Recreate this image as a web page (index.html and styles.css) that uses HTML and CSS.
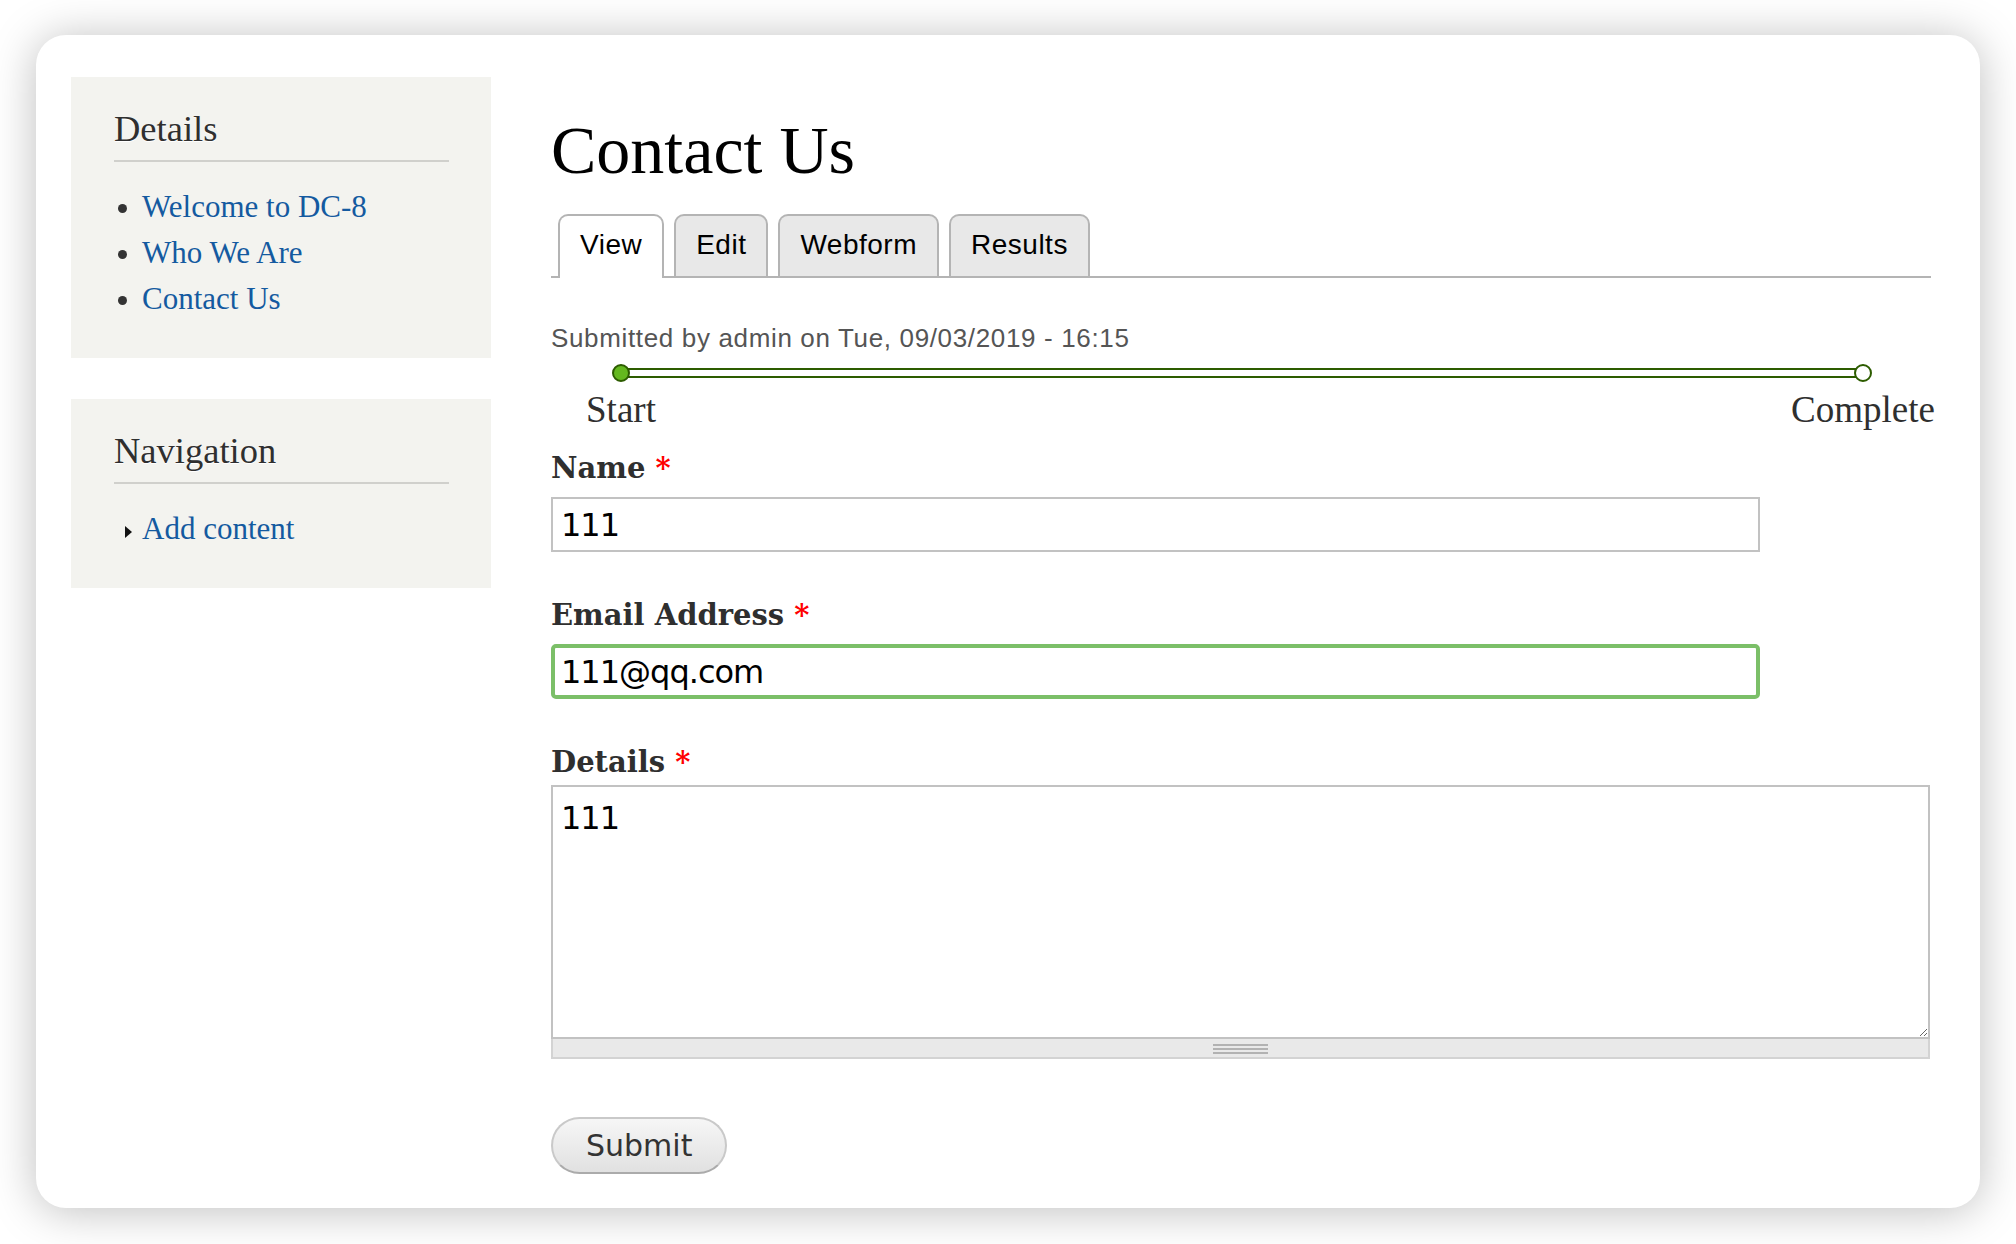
FILE: index.html
```html
<!DOCTYPE html>
<html lang="en">
<head>
<meta charset="utf-8">
<title>Contact Us | DC-8</title>
<link rel="stylesheet" href="styles.css">
</head>
<body>
<div class="card">
  <aside class="sidebar">
    <section class="block">
      <h2 class="block-title">Details</h2>
      <ul class="menu">
        <li class="leaf"><a href="#">Welcome to DC-8</a></li>
        <li class="leaf"><a href="#">Who We Are</a></li>
        <li class="leaf"><a href="#">Contact Us</a></li>
      </ul>
    </section>
    <section class="block">
      <h2 class="block-title">Navigation</h2>
      <ul class="menu">
        <li class="collapsed"><a href="#">Add content</a></li>
      </ul>
    </section>
  </aside>

  <main class="main">
    <h1 class="page-title">Contact Us</h1>
    <ul class="tabs">
      <li class="tab active"><a href="#">View</a></li>
      <li class="tab"><a href="#">Edit</a></li>
      <li class="tab"><a href="#">Webform</a></li>
      <li class="tab"><a href="#">Results</a></li>
    </ul>

    <p class="submitted">Submitted by admin on Tue, 09/03/2019 - 16:15</p>

    <div class="progress">
      <div class="step"><span class="dot done"></span><span class="step-label">Start</span></div>
      <div class="step step-end"><span class="dot"></span><span class="step-label">Complete</span></div>
    </div>

    <form class="form" onsubmit="return false">
      <div class="field">
        <label class="field-label" for="name">Name <span class="req">*</span></label>
        <input class="text-input" id="name" type="text" value="111">
      </div>
      <div class="field">
        <label class="field-label" for="email">Email Address <span class="req">*</span></label>
        <input class="text-input focused" id="email" type="email" value="111@qq.com">
      </div>
      <div class="field field-area">
        <label class="field-label" for="details">Details <span class="req">*</span></label>
        <textarea class="textarea" id="details">111</textarea>
        <div class="grippie"><div class="grip-lines"></div></div>
      </div>
      <button class="submit" type="submit">Submit</button>
    </form>
  </main>
</div>
</body>
</html>
```

FILE: styles.css
```css
html, body {
  margin: 0;
  padding: 0;
  background: #ffffff;
}

body {
  width: 2016px;
  height: 1244px;
  overflow: hidden;
  font-family: "Liberation Serif", serif;
  color: #333;
}

.card {
  box-sizing: border-box;
  width: 1944px;
  height: 1173px;
  margin: 35px 36px 0 36px;
  padding: 42px 49px 0 35px;
  background: #fff;
  border-radius: 30px;
  box-shadow: 0 3px 46px rgba(0, 0, 0, 0.26);
  display: flex;
  gap: 60px;
}

/* ---------- Sidebar ---------- */
.sidebar {
  width: 420px;
  flex: none;
  display: flex;
  flex-direction: column;
  gap: 41px;
}

.block {
  background: #f3f3ef;
  padding: 30px 42px 36px 43px;
}

.block-title {
  margin: 0;
  padding-bottom: 9px;
  border-bottom: 2px solid #d0d0cc;
  font-family: "Liberation Serif", serif;
  font-weight: normal;
  font-size: 36.5px;
  line-height: 44px;
  color: #2f2f2f;
  text-shadow: 0 1px 0 #fff;
}

.menu {
  list-style: none;
  margin: 22px 0 0 0;
  padding: 0 0 0 4px;
}

.menu li {
  display: flex;
  align-items: center;
  font-size: 31px;
  line-height: 46px;
}

.menu li.leaf::before {
  content: "";
  width: 9px;
  height: 9px;
  border-radius: 50%;
  background: #333;
  margin-right: 15px;
  margin-top: 2px;
  flex: none;
}

.menu li.collapsed::before {
  content: "";
  width: 0;
  height: 0;
  border-left: 7px solid #111;
  border-top: 6px solid transparent;
  border-bottom: 6px solid transparent;
  margin-left: 7px;
  margin-right: 10px;
  margin-top: 6px;
  flex: none;
}

.menu a {
  color: #145aa0;
  text-decoration: none;
}

/* ---------- Main ---------- */
.main {
  flex: 1;
  min-width: 0;
}

.page-title {
  margin: 33px 0 0 0;
  font-family: "Liberation Serif", serif;
  font-weight: normal;
  font-size: 68px;
  line-height: 80px;
  color: #000;
}

.tabs {
  list-style: none;
  margin: 24px 0 0 0;
  padding: 0 0 0 7px;
  display: flex;
  align-items: flex-end;
  gap: 10px;
  border-bottom: 2px solid #b4b4b4;
  height: 62px;
}

.tab {
  box-sizing: border-box;
  height: 62px;
  padding: 14px 20px 16px 20px;
  border: 2px solid #b4b4b4;
  border-bottom: none;
  border-radius: 10px 10px 0 0;
  background: #e8e8e8;
  font-family: "Liberation Sans", Arial, sans-serif;
  font-size: 28px;
  letter-spacing: 0.5px;
  line-height: 30px;
}

.tab.active {
  background: #fff;
  height: 64px;
  margin-bottom: -2px;
  padding-bottom: 18px;
}

.tab a {
  color: #000;
  text-decoration: none;
}

.submitted {
  margin: 45px 0 0 0;
  font-family: "Liberation Sans", Arial, sans-serif;
  font-size: 26px;
  letter-spacing: 0.65px;
  line-height: 30px;
  color: #555;
}

/* ---------- Progress ---------- */
.progress {
  position: relative;
  margin-top: 11px;
  display: flex;
  justify-content: space-between;
}

.progress::before {
  content: "";
  position: absolute;
  left: 70px;
  right: 68px;
  top: 4px;
  height: 10px;
  box-sizing: border-box;
  border-top: 2px solid #2d5c00;
  border-bottom: 2px solid #2d5c00;
}

.step {
  width: 140px;
  display: flex;
  flex-direction: column;
  align-items: center;
}

.step-end {
  width: 136px;
}

.dot {
  position: relative;
  z-index: 1;
  box-sizing: border-box;
  width: 18px;
  height: 18px;
  border: 2px solid #2d5c00;
  border-radius: 50%;
  background: #fff;
}

.dot.done {
  background: #64b81f;
}

.step-label {
  margin-top: 8px;
  font-family: "Liberation Serif", serif;
  font-size: 37px;
  line-height: 40px;
  color: #2f2f2f;
  white-space: nowrap;
}

/* ---------- Form ---------- */
.form {
  margin-top: 20px;
  display: flex;
  flex-direction: column;
  align-items: flex-start;
}

.field {
  display: flex;
  flex-direction: column;
  align-items: flex-start;
  margin-bottom: 45px;
}

.field-label {
  font-family: "DejaVu Serif", "Liberation Serif", serif;
  font-weight: bold;
  font-size: 29px;
  line-height: 36px;
  color: #2f2f2f;
  margin-bottom: 11px;
}

.req {
  color: #f00;
}

.text-input {
  box-sizing: border-box;
  width: 1209px;
  height: 55px;
  margin: 0;
  padding: 0 8px;
  border: 2px solid #c2c2c2;
  border-radius: 0;
  outline: none;
  background: #fff;
  font-family: "DejaVu Sans", sans-serif;
  font-size: 32px;
  letter-spacing: -1px;
  color: #000;
}

.text-input.focused {
  border: 4px solid #7bbf68;
  border-radius: 5px;
  padding: 0 6px;
}

.field-area {
  margin-bottom: 58px;
}

.field-area .field-label {
  margin-bottom: 5px;
}

.textarea {
  display: block;
  box-sizing: border-box;
  width: 1379px;
  height: 254px;
  margin: 0;
  padding: 12px 8px;
  border: 2px solid #c2c2c2;
  border-radius: 0;
  outline: none;
  resize: vertical;
  font-family: "DejaVu Sans", sans-serif;
  font-size: 32px;
  letter-spacing: -1px;
  line-height: normal;
  color: #000;
  background: #fff;
}

.grippie {
  box-sizing: border-box;
  width: 1379px;
  height: 20px;
  background: #e9e9e9;
  border: 2px solid #d3d3d3;
  border-top: none;
  padding-top: 5px;
}

.grip-lines {
  width: 55px;
  height: 10px;
  margin: 0 auto;
  background: repeating-linear-gradient(to bottom, #b2b2b2 0, #b2b2b2 2px, transparent 2px, transparent 4px);
}

.submit {
  box-sizing: border-box;
  height: 57px;
  margin: 0;
  padding: 0 33px;
  border: 2px solid #c9c9c9;
  border-bottom-color: #ababab;
  border-radius: 29px;
  background: linear-gradient(#f6f6f6, #e1e1e1);
  font-family: "DejaVu Sans", sans-serif;
  font-size: 30px;
  color: #333;
  cursor: pointer;
}
```
